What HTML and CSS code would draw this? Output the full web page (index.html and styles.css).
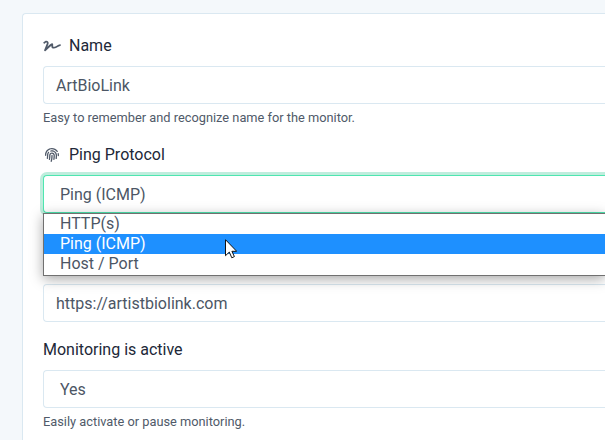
FILE: index.html
```html
<!DOCTYPE html>
<html lang="en">
<head>
<meta charset="utf-8">
<title>Monitor</title>
<link rel="stylesheet" href="styles.css">
</head>
<body>
<main class="card">
  <div class="group">
    <label class="label"><svg class="icon" viewBox="0 0 640 512"><path d="M623.2 192c-51.8 3.5-125.7 54.7-163.1 71.5-29.1 13.1-54.2 24.4-76.1 24.4-22.6 0-26-16.2-21.3-51.9 1.1-8 11.7-79.2-42.7-76.1-25.1 1.5-64.3 24.8-169.5 126L192 182.2c30.4-75.9-53.2-151.5-129.7-102.8L7.4 116.3C0 121-2.2 130.9 2.5 138.4l17.2 27c4.7 7.5 14.6 9.7 22.1 4.9l58-38.9c18.4-11.7 40.7 7.2 32.7 27.1L34.3 404.1C27.5 421 37 448 64 448c8.3 0 16.5-3.2 22.6-9.4 42.2-42.2 154.7-150.7 211.2-195.8-2.2 28.5-2.1 58.9 20.6 83.8 15.3 16.8 37.3 25.3 65.5 25.3 35.6 0 68-14.6 102.3-30 33-14.8 99-62.6 138.4-65.8 8.5-.7 15.2-7.3 15.2-15.8v-32.1c.2-9.1-7.5-16.8-16.6-16.2z"/></svg>Name</label>
    <div class="control">ArtBioLink</div>
    <small class="help">Easy to remember and recognize name for the monitor.</small>
  </div>
  <div class="group group-select">
    <label class="label"><svg class="icon" viewBox="0 0 512 512"><path d="M256.12 245.96c-13.25 0-24 10.74-24 24 1.14 72.25-8.14 141.9-27.7 211.55-2.73 9.72 2.15 30.49 23.12 30.49 10.48 0 20.11-6.92 23.09-17.52 13.53-47.91 31.04-125.41 29.48-224.52.01-13.25-10.73-24-23.99-24zm-.86-81.73C194 164.16 151.25 211.3 152.1 265.32c.75 47.86-3.75 95.91-13.37 142.81-2.69 12.98 5.67 25.69 18.64 28.36 13.05 2.67 25.67-5.66 28.36-18.64 10.34-50.45 15.17-102.06 14.37-153.41-.41-25.95 19.92-52.49 54.45-52.34 31.31.47 57.15 25.34 57.62 55.47.77 48.05-2.81 96.33-10.61 143.55-2.17 13.06 6.69 25.42 19.76 27.58 19.97 3.33 26.81-15.1 27.58-19.77 8.28-50.03 12.06-101.21 11.27-152.11-.88-55.8-47.94-101.88-104.91-102.72zm-110.69-19.78c-10.3-8.34-25.37-6.8-33.76 3.48-25.62 31.5-39.39 71.28-38.75 112 .59 37.58-2.47 75.27-9.11 112.05-2.34 13.05 6.31 25.53 19.36 27.89 20.11 3.5 27.07-14.81 27.89-19.36 7.19-39.84 10.5-80.66 9.86-121.33-.47-29.88 9.2-57.88 28-80.97 8.35-10.28 6.79-25.39-3.49-33.76zm109.47-62.33c-15.41-.41-30.87 1.44-45.78 4.97-12.89 3.06-20.87 15.98-17.83 28.89 3.06 12.89 16 20.83 28.89 17.83 11.05-2.61 22.47-3.77 34-3.69 75.43 1.13 137.73 61.5 138.88 134.58.59 37.88-1.28 76.11-5.58 113.63-1.5 13.17 7.95 25.08 21.11 26.58 16.72 1.95 25.51-11.88 26.58-21.11a929.06 929.06 0 0 0 5.89-119.85c-1.56-98.75-85.07-180.33-186.16-181.83zm252.07 121.45c-2.86-12.92-15.51-21.2-28.61-18.27-12.94 2.86-21.12 15.66-18.26 28.61 4.71 21.41 4.91 37.41 4.7 61.6-.11 13.27 10.55 24.09 23.8 24.2h.2c13.17 0 23.89-10.61 24-23.8.18-22.18.4-44.11-5.83-72.34zm-40.12-90.72C417.29 43.46 337.6 1.29 252.81.02 183.02-.82 118.47 24.91 70.46 72.94 24.09 119.37-.9 181.04.14 246.65l-.12 21.47c-.39 13.25 10.03 24.31 23.28 24.69.23.02.48.02.72.02 12.92 0 23.59-10.3 23.97-23.3l.16-23.64c-.83-52.5 19.16-101.86 56.28-139 38.76-38.8 91.34-59.67 147.68-58.86 69.45 1.03 134.73 35.56 174.62 92.39 7.61 10.86 22.56 13.45 33.42 5.86 10.84-7.62 13.46-22.59 5.84-33.43z"/></svg>Ping Protocol</label>
    <div class="select-wrap">
      <div class="control select focused">Ping (ICMP)</div>
      <div class="menu">
        <div class="option">HTTP(s)</div>
        <div class="option selected">Ping (ICMP)</div>
        <div class="option">Host / Port</div>
        <svg class="cursor" viewBox="0 0 12 20"><path d="M.5.7v16l3.8-3.6 2.5 5.7 2.6-1.2-2.5-5.3h4.8z"/></svg>
      </div>
    </div>
  </div>
  <div class="group">
    <div class="control">https://artistbiolink.com</div>
  </div>
  <div class="group">
    <label class="label">Monitoring is active</label>
    <div class="control select">Yes</div>
    <small class="help">Easily activate or pause monitoring.</small>
  </div>
</main>
</body>
</html>
```
FILE: styles.css
```css
* {
  box-sizing: border-box;
}

body {
  display: flow-root;
  margin: 0;
  height: 440px;
  overflow: hidden;
  background: #f4f8fb;
  font: 16px/24px Roboto, sans-serif;
  color: #212838;
}

.card {
  height: 427px;
  margin: 13px 0 0 22px;
  padding: 20px 0 0 20px;
  background: #fff;
  border: 1px solid #dae8f1;
  border-width: 1px 0 0 1px;
  border-radius: 4px 0 0 0;
}

.group {
  margin-bottom: 16px;
}

.group:last-child {
  margin-bottom: 0;
}

.group-select {
  margin-bottom: 71px;
}

.label {
  display: flex;
  align-items: center;
  height: 24px;
  margin-bottom: 8px;
}

.icon {
  width: 18px;
  height: 14px;
  margin-right: 8px;
  fill: #505a69;
}

.control {
  height: 38px;
  padding: 7px 0 5px 12px;
  border: 1px solid #dae8f1;
  border-right: 0;
  border-radius: 4px 0 0 4px;
  background: #fff;
  color: #4c5665;
}

.select {
  padding-left: 16px;
}

.focused {
  border-color: #4ee6b0;
  box-shadow: 0 0 0 3px #bfeddd;
}

.help {
  display: block;
  height: 19px;
  margin-top: 4px;
  font-size: 12.8px;
  line-height: 19px;
  color: #505a69;
}

.select-wrap {
  position: relative;
}

.menu {
  position: absolute;
  top: 38px;
  left: 0;
  right: 0;
  height: 63px;
  background: #fff;
  border: 1px solid #707070;
  border-right: 0;
  box-shadow: 0 3px 12px rgba(0, 0, 0, .35);
}

.option {
  height: 20px;
  padding-left: 16px;
  line-height: 20px;
  color: #4c5665;
}

.selected {
  background: #1e90ff;
  color: #fff;
}

.cursor {
  position: absolute;
  top: 25px;
  left: 181px;
  width: 12px;
  height: 20px;
  fill: #fff;
  stroke: #111;
}
```
